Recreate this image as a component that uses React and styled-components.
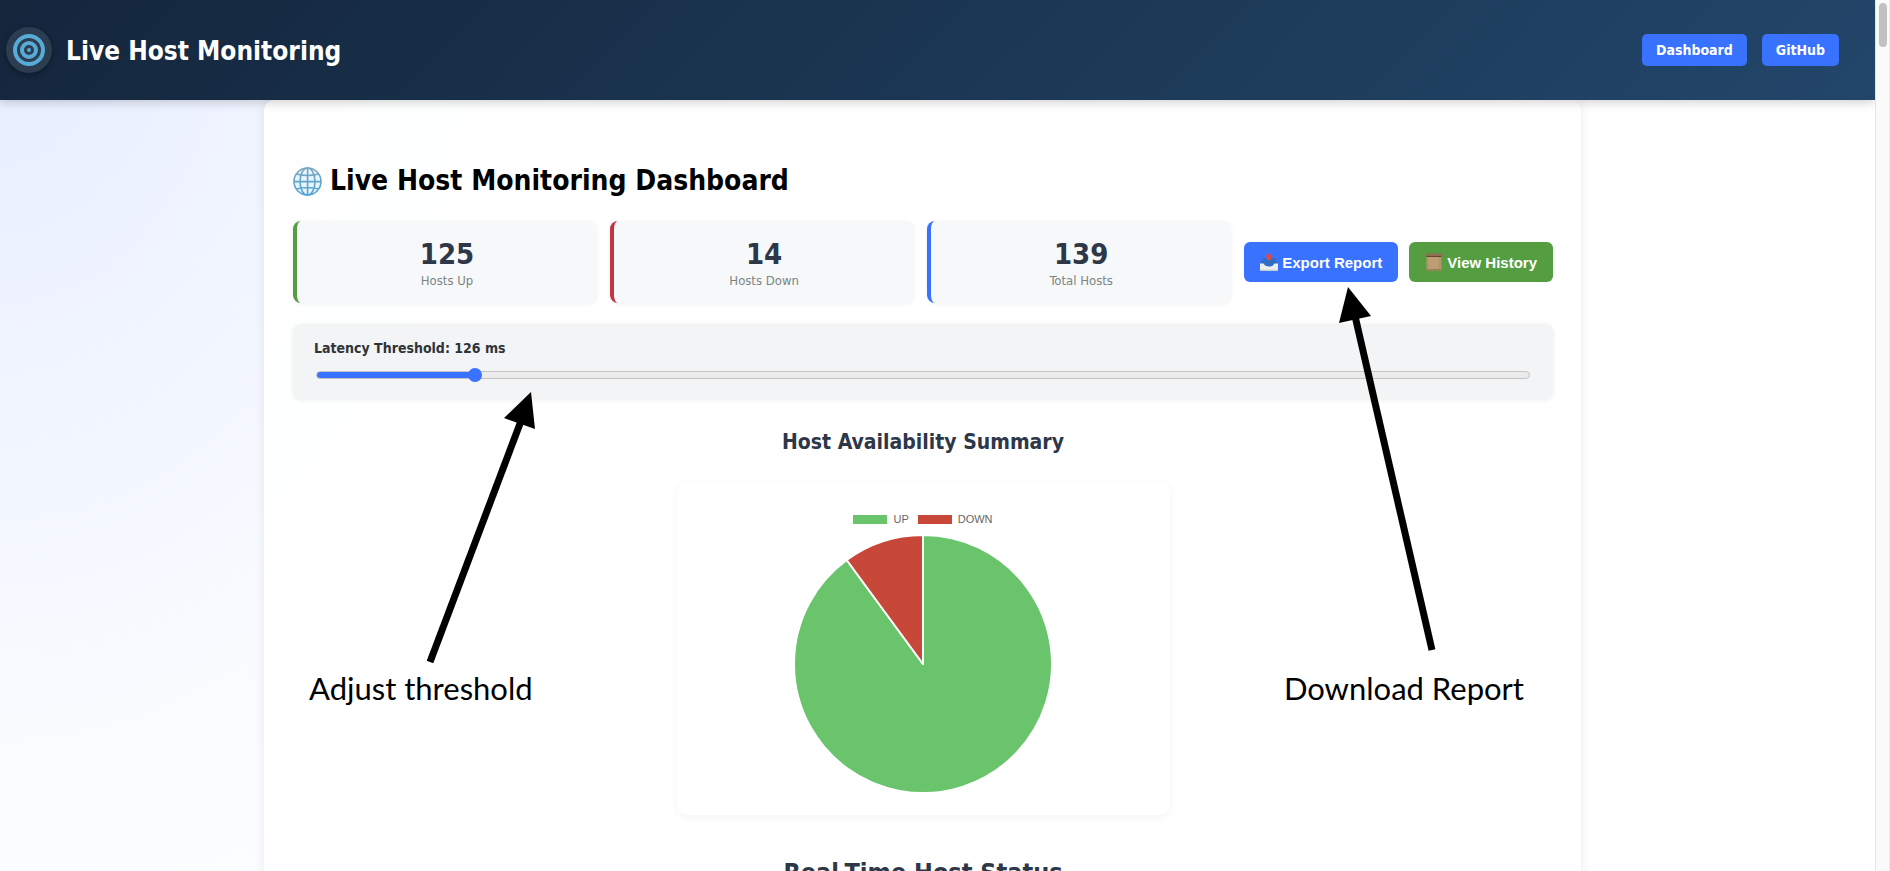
import React, { useState } from "react";
import styled, { createGlobalStyle } from "styled-components";

const GlobalStyle = createGlobalStyle`
  * { box-sizing: border-box; }
  body {
    margin: 0;
    font-family: "DejaVu Sans Condensed", "DejaVu Sans", Tahoma, sans-serif;
    color: #2d3748;
    background: #ffffff;
  }
`;

const Shell = styled.div`
  display: grid;
  grid-template-columns: minmax(0, 1fr) 15px;
  height: 100vh;
  overflow: hidden;
`;

const Page = styled.div`
  overflow: hidden;
  background: radial-gradient(ellipse 900px 1200px at 0 0, #e6edff 0%, #f9fbff 60%, #ffffff 100%);
`;

const ScrollTrack = styled.div`
  padding: 3px 2px;
  background: #fafafa;
  border-left: 1px solid #e4e4e4;
  border-right: 1px solid #eeeeee;
`;

const ScrollThumb = styled.div`
  width: 8px;
  height: 44px;
  margin: 0 auto;
  border-radius: 4px;
  background: #c1c1c1;
`;

const Header = styled.header`
  position: relative;
  z-index: 1;
  display: flex;
  align-items: center;
  justify-content: space-between;
  height: 100px;
  padding: 0 36px 0 6px;
  background: linear-gradient(135deg, #14263c 0%, #22466a 100%);
  box-shadow: 0 2px 10px rgba(0, 0, 0, 0.2);
`;

const Brand = styled.div`
  display: flex;
  align-items: center;
  gap: 14px;
`;

const Logo = styled.span`
  display: grid;
  place-items: center;
  width: 46px;
  height: 46px;
  border-radius: 50%;
  background: #2c3d51;
  box-shadow: 0 2px 6px rgba(0, 0, 0, 0.3);
`;

const BrandName = styled.span`
  padding-top: 2px;
  font-size: 26px;
  font-weight: 700;
  line-height: 32px;
  color: #ffffff;
`;

const Nav = styled.nav`
  display: flex;
  gap: 15px;
`;

const NavLink = styled.a`
  padding: 0 14px;
  border-radius: 5px;
  background: #3872ff;
  color: #ffffff;
  font-size: 14px;
  font-weight: 700;
  line-height: 32px;
  text-decoration: none;
`;

const Main = styled.main`
  padding-right: 30px;
`;

const Card = styled.div`
  position: relative;
  width: 100%;
  max-width: 1317px;
  margin: 0 auto;
  padding: 61px 28px 0 29px;
  border-radius: 10px;
  background: rgba(255, 255, 255, 0.9);
  box-shadow: 0 0 12px rgba(0, 0, 0, 0.08);
`;

const Title = styled.h1`
  display: flex;
  align-items: center;
  gap: 8px;
  margin: 0 0 20px;
  font-size: 28px;
  line-height: 40px;
  color: #000000;
`;

const Summary = styled.div`
  display: flex;
  align-items: center;
  gap: 13px;
  margin-bottom: 21px;
`;

const Stat = styled.div`
  flex: 1;
  padding: 15px 0 14px;
  border-left: 4px solid ${(p) => p.$accent};
  border-radius: 8px;
  background: #f7f8fa;
  box-shadow: 0 1px 4px rgba(0, 0, 0, 0.06);
  text-align: center;
`;

const StatValue = styled.div`
  font-size: 29px;
  font-weight: 700;
  line-height: 36px;
`;

const StatLabel = styled.div`
  font-size: 13px;
  line-height: 17px;
  color: #7a8583;
`;

const Actions = styled.div`
  display: flex;
  gap: 11px;
`;

const ActionButton = styled.button`
  display: flex;
  align-items: center;
  gap: 4px;
  height: 40px;
  padding: 0 16px;
  border: 0;
  border-radius: 6px;
  background: ${(p) => p.$color};
  color: #ffffff;
  font: 700 15px "Liberation Sans", Arial, sans-serif;
  cursor: pointer;
`;

const Threshold = styled.section`
  padding: 15px 21px 16px;
  border-radius: 8px;
  background: #f3f4f6;
  box-shadow: 0 1px 5px rgba(0, 0, 0, 0.08);
`;

const ThresholdLabel = styled.label`
  display: block;
  margin-bottom: 10px;
  font-size: 14px;
  font-weight: 700;
  line-height: 18px;
  color: #2f3336;
`;

const Slider = styled.input`
  display: block;
  appearance: none;
  width: calc(100% - 4px);
  height: 16px;
  margin: 0 2px;
  background: transparent;

  &::-webkit-slider-runnable-track {
    height: 8px;
    border: 1px solid #c4c4c4;
    border-radius: 4px;
    background: linear-gradient(
      to right,
      #3872ff ${(p) => p.$fill}%,
      #ebebeb ${(p) => p.$fill}%
    );
  }

  &::-webkit-slider-thumb {
    appearance: none;
    width: 14px;
    height: 14px;
    margin-top: -4px;
    border-radius: 50%;
    background: #3872ff;
  }
`;

const SectionTitle = styled.h2`
  margin: 0;
  font-size: ${(p) => (p.$large ? 25 : 21)}px;
  line-height: 30px;
  text-align: center;
`;

const ChartSection = styled.section`
  margin: 28px 0 43px;
`;

const ChartBox = styled.div`
  display: flex;
  flex-direction: column;
  align-items: center;
  width: 100%;
  max-width: 493px;
  margin: 26px auto 0;
  padding: 29px 20px 21px;
  border-radius: 10px;
  background: #ffffff;
  box-shadow: 0 2px 10px rgba(0, 0, 0, 0.05);
`;

const Legend = styled.div`
  display: flex;
  gap: 9px;
  margin-bottom: 8px;
`;

const LegendItem = styled.span`
  display: flex;
  align-items: center;
  gap: 6px;
  font: 11px/14px "Liberation Sans", Arial, sans-serif;
  color: #666666;

  &::before {
    content: "";
    width: 34px;
    height: 9px;
    background: ${(p) => p.$color};
  }
`;

const Callout = styled.div`
  position: absolute;
  top: ${(p) => p.$top}px;
  left: ${(p) => p.$left};
  right: ${(p) => p.$right};
  display: flex;
  flex-direction: column;
  align-items: ${(p) => p.$align};
  gap: 4px;
  pointer-events: none;
  font-family: Lato, "Gill Sans", sans-serif;
  font-size: 31px;
  line-height: 40px;
  color: #000000;
  white-space: nowrap;
`;

const TargetIcon = () => (
  <svg width="32" height="32" viewBox="0 0 32 32" fill="none" stroke="#56acd6" aria-hidden="true">
    <circle cx="16" cy="16" r="14" strokeWidth="4" />
    <circle cx="16" cy="16" r="7" strokeWidth="4" />
    <circle cx="16" cy="16" r="2" fill="#56acd6" stroke="none" />
  </svg>
);

const GlobeIcon = () => (
  <svg width="29" height="29" viewBox="0 0 29 29" fill="none" aria-hidden="true">
    <defs>
      <linearGradient id="globe" x1="0" y1="0" x2="0" y2="1">
        <stop offset="0" stopColor="#7ba6c0" />
        <stop offset="1" stopColor="#4fa3d4" />
      </linearGradient>
    </defs>
    <circle cx="14.5" cy="14.5" r="13.5" fill="#e6f4fc" />
    <g stroke="url(#globe)" strokeWidth="1.6">
      <circle cx="14.5" cy="14.5" r="13.5" />
      <ellipse cx="14.5" cy="14.5" rx="7.5" ry="13.5" />
      <path d="M14.6 1V28M1 14.6H28M3.5 7q11 3 22 0M3.5 22q11-3 22 0" />
    </g>
  </svg>
);

const OutboxIcon = () => (
  <svg width="18" height="18" viewBox="0 0 18 18" aria-hidden="true">
    <path d="M3 5.5h12l3 6H0z" fill="#3f6fb5" />
    <path d="M3 5.5h12l2 4.500q-3 4-8 4t-8-4z" fill="#2f6fc0" />
    <path d="M0 10.500h3.500q1.500 3 5.500 3t5.500-3H18V18H0z" fill="#eceef0" />
    <path d="M0 16.500h18V18H0z" fill="#c9cdd2" />
    <path d="M9 0l4 4H11V7H7V4H5z" fill="#e0484b" />
  </svg>
);

const ScrollIcon = () => (
  <svg width="18" height="18" viewBox="0 0 18 18" aria-hidden="true">
    <path d="M1.500 2h15v15.500h-15z" fill="#b5946a" />
    <path d="M3.500 4h10v12h-10z" fill="#bd9e74" />
    <path d="M.5 .5h17v3H.5z" fill="#8d7050" />
    <path d="M1.500 3h15v1h-15z" fill="#5f4930" />
    <path d="M1.500 16h15v1.500h-15z" fill="#a07e55" />
  </svg>
);

const STATS = [
  { value: 125, label: "Hosts Up", accent: "#549d41" },
  { value: 14, label: "Hosts Down", accent: "#c13441" },
  { value: 139, label: "Total Hosts", accent: "#3872ff" },
];

const UP_COLOR = "#69c46b";
const DOWN_COLOR = "#c74738";

function PieChart({ up, down }) {
  const r = 129;
  const c = 130;
  const angle = (2 * Math.PI * up) / (up + down);
  const x = c + r * Math.sin(angle);
  const y = c - r * Math.cos(angle);
  return (
    <svg width="260" height="260" viewBox="0 0 260 260" role="img" aria-label="Hosts up and down">
      <g stroke="#ffffff" strokeWidth="2" strokeLinejoin="round">
        <path d={`M${c} ${c}V${c - r}A${r} ${r} 0 1 1 ${x} ${y}Z`} fill={UP_COLOR} />
        <path d={`M${c} ${c}L${x} ${y}A${r} ${r} 0 0 1 ${c} ${c - r}Z`} fill={DOWN_COLOR} />
      </g>
    </svg>
  );
}

export default function App() {
  const [latency, setLatency] = useState(126);
  const max = 1000;
  return (
    <>
      <GlobalStyle />
      <Shell>
        <Page>
          <Header>
            <Brand>
              <Logo>
                <TargetIcon />
              </Logo>
              <BrandName>Live Host Monitoring</BrandName>
            </Brand>
            <Nav>
              <NavLink href="#dashboard">Dashboard</NavLink>
              <NavLink href="#github">GitHub</NavLink>
            </Nav>
          </Header>
          <Main>
            <Card>
              <Title>
                <GlobeIcon />
                Live Host Monitoring Dashboard
              </Title>
              <Summary>
                {STATS.map((s) => (
                  <Stat key={s.label} $accent={s.accent}>
                    <StatValue>{s.value}</StatValue>
                    <StatLabel>{s.label}</StatLabel>
                  </Stat>
                ))}
                <Actions>
                  <ActionButton type="button" $color="#3872ff">
                    <OutboxIcon />
                    Export Report
                  </ActionButton>
                  <ActionButton type="button" $color="#549d41">
                    <ScrollIcon />
                    View History
                  </ActionButton>
                </Actions>
              </Summary>
              <Threshold>
                <ThresholdLabel htmlFor="latency">Latency Threshold: {latency} ms</ThresholdLabel>
                <Slider
                  id="latency"
                  type="range"
                  min="0"
                  max={max}
                  value={latency}
                  $fill={(latency / max) * 100}
                  onChange={(e) => setLatency(Number(e.target.value))}
                />
              </Threshold>
              <ChartSection>
                <SectionTitle>Host Availability Summary</SectionTitle>
                <ChartBox>
                  <Legend>
                    <LegendItem $color={UP_COLOR}>UP</LegendItem>
                    <LegendItem $color={DOWN_COLOR}>DOWN</LegendItem>
                  </Legend>
                  <PieChart up={125} down={14} />
                </ChartBox>
              </ChartSection>
              <SectionTitle $large>Real-Time Host Status</SectionTitle>

              <Callout $top={292} $left="45px" $right="auto" $align="flex-start">
                <svg width="230" height="272" viewBox="0 0 230 272" aria-hidden="true">
                  <path d="M121 270L212 29" stroke="#000000" strokeWidth="7" />
                  <path d="M222 0L195 26L226 37Z" />
                </svg>
                Adjust threshold
              </Callout>
              <Callout $top={187} $left="auto" $right="57px" $align="flex-end">
                <svg width="237" height="377" viewBox="0 0 237 377" aria-hidden="true">
                  <path d="M145 363L68 29" stroke="#000000" strokeWidth="7" />
                  <path d="M61 0L52 36L84 29Z" />
                </svg>
                Download Report
              </Callout>
            </Card>
          </Main>
        </Page>
        <ScrollTrack>
          <ScrollThumb />
        </ScrollTrack>
      </Shell>
    </>
  );
}
